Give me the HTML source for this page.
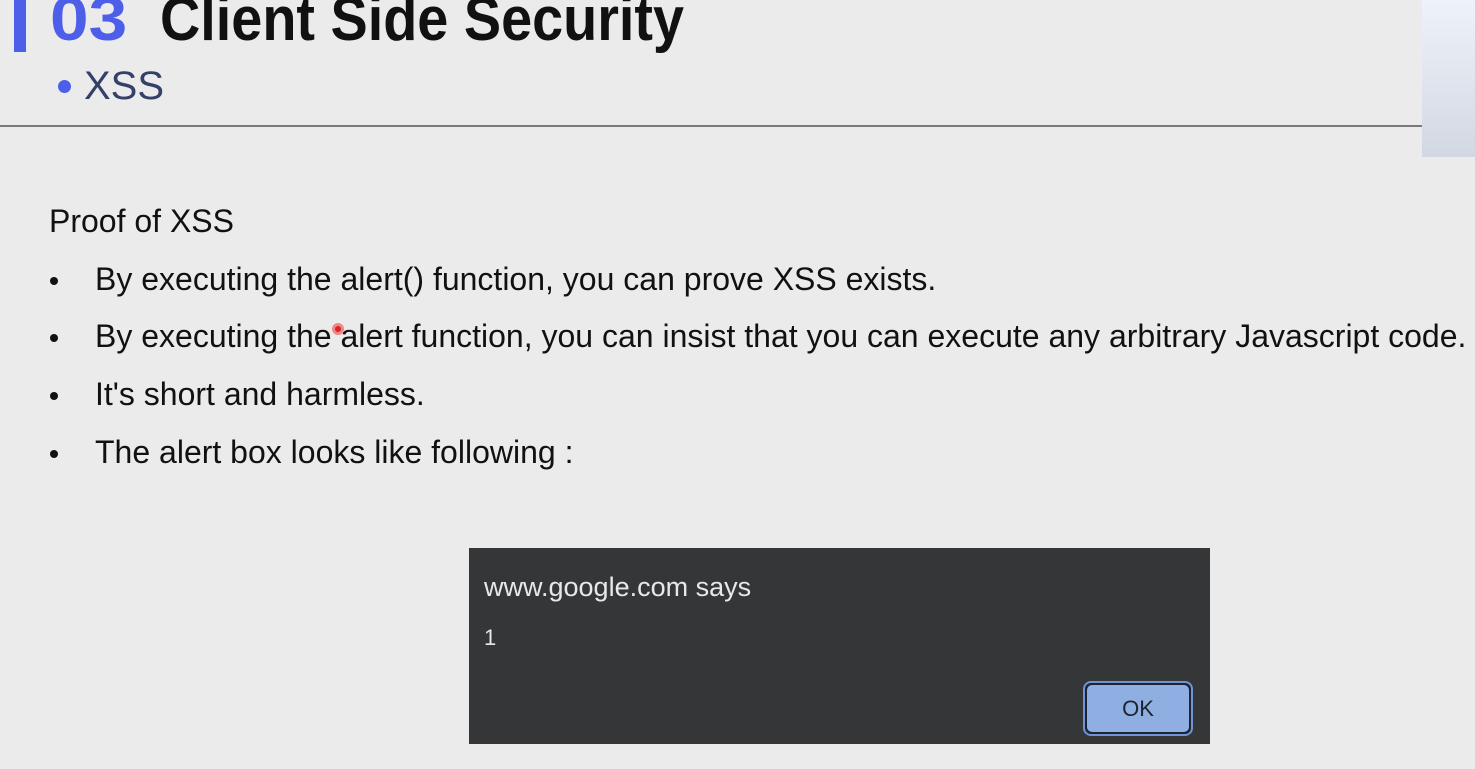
<!DOCTYPE html>
<html><head><meta charset="utf-8"><style>
html,body{margin:0;padding:0}
body{width:1475px;height:769px;background:#ebebeb;position:relative;overflow:hidden;font-family:"Liberation Sans",Arial,sans-serif}
.a{position:absolute;white-space:nowrap}
.bar{left:14px;top:0;width:12px;height:52px;background:#4d5ee8}
.num{left:50px;top:-16px;font-size:62px;font-weight:bold;color:#4d5ee8;transform-origin:0 0;transform:scaleX(1.12)}
.title{left:160px;top:-16px;font-size:62px;font-weight:bold;color:#111;transform-origin:0 0;transform:scaleX(0.9)}
.dot{left:58px;top:80px;width:13px;height:13px;border-radius:50%;background:#4d5ee8}
.sub{left:84px;top:64px;font-size:40px;color:#34406a}
.hr{left:0;top:125px;width:1422px;height:2px;background:#7b7b7b}
.side{left:1422px;top:0;width:53px;height:157px;background:linear-gradient(#eef2fa,#d2d8e2)}
.t{font-size:32px;color:#111}
.b{left:50px;width:8px;height:8px;border-radius:50%;background:#111}
.dlg{left:469px;top:548px;width:741px;height:196px;background:#353638}
.ok{left:1083px;top:681px;width:106px;height:51px;border:2px solid #6f95d8;border-radius:8px;background:#1d2330}
.ok div{position:absolute;left:2px;top:2px;right:2px;bottom:2px;background:#8faee2;border-radius:5px;color:#1d2330;font-size:22px;text-align:center;line-height:47px}
</style></head><body>
<div class="a bar"></div>
<div class="a num">03</div>
<div class="a title">Client Side Security</div>
<div class="a dot"></div>
<div class="a sub">XSS</div>
<div class="a hr"></div>
<div class="a side"></div>
<div class="a t" style="left:49px;top:203px">Proof of XSS</div>
<div class="a b" style="top:277px"></div><div class="a t" style="left:95px;top:261px">By executing the alert() function, you can prove XSS exists.</div>
<div class="a b" style="top:334px"></div><div class="a t" style="left:95px;top:318px">By executing the alert function, you can insist that you can execute any arbitrary Javascript code.</div>
<div class="a b" style="top:392px"></div><div class="a t" style="left:95px;top:376px">It's short and harmless.</div>
<div class="a b" style="top:450px"></div><div class="a t" style="left:95px;top:434px">The alert box looks like following :</div>
<div class="a" style="left:332px;top:323px;width:12px;height:12px;border-radius:50%;background:#e88;"></div>
<div class="a" style="left:335px;top:326px;width:6px;height:6px;border-radius:50%;background:#d22;"></div>
<div class="a dlg"></div>
<div class="a" style="left:484px;top:572px;font-size:27px;color:#e8e8e8">www.google.com says</div>
<div class="a" style="left:484px;top:625px;font-size:22px;color:#e8e8e8">1</div>
<div class="a ok"><div>OK</div></div>
</body></html>
